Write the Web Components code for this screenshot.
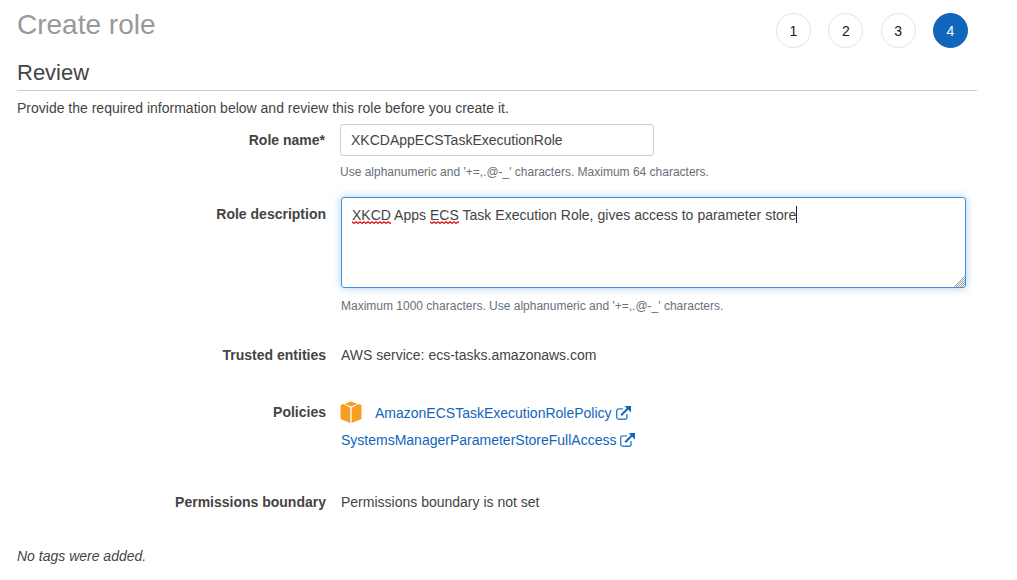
<!DOCTYPE html>
<html>
<head>
<meta charset="utf-8">
<style>
  html, body { margin: 0; height: 580px; overflow: hidden; background: #fff; }
  body { font-family: "Liberation Sans", Arial, sans-serif; font-size: 14px; color: #444; }
  .typo { padding-bottom: 1px; background: url("data:image/svg+xml,%3Csvg xmlns='http://www.w3.org/2000/svg' width='4' height='3'%3E%3Cpath d='M0 .9C1 .9 1 2.2 2 2.2S3 .9 4 .9' fill='none' stroke='%23e00000' stroke-width='1.2'/%3E%3C/svg%3E") repeat-x left bottom; }
</style>
</head>
<body>
<template id="step-tpl">
  <style>
    :host { display: flex; width: 35px; height: 35px; box-sizing: border-box; border-radius: 50%; border: 1px solid #e1e4e4;
      align-items: center; justify-content: center; font-size: 14px; color: #16191f; background: #fff; }
    :host([active]) { background: #1166bb; border-color: #1166bb; color: #fff; }
  </style>
  <slot></slot>
</template>

<template id="row-tpl">
  <style>
    :host { display: grid; grid-template-columns: var(--label-width, 309px) 1fr; column-gap: 15px; }
    .label { font-weight: bold; text-align: right; color: #444; line-height: 20px; padding-top: var(--label-pad, 0); }
    .hint { font-size: 12px; color: #687078; line-height: 16px; margin-top: var(--hint-gap, 7px); }
    .value { min-width: 0; line-height: 20px; }
  </style>
  <div class="label"><slot name="label"></slot></div>
  <div class="value"><slot></slot><div class="hint"><slot name="hint"></slot></div></div>
</template>

<template id="link-tpl">
  <style>
    :host { display: inline-flex; align-items: center; gap: 4px; color: #1166bb; line-height: 20px; }
    svg { width: 15px; height: 14px; display: block; }
  </style>
  <slot></slot>
  <svg viewBox="0 0 15 14" fill="none" stroke="#1166bb" stroke-width="1.4">
    <path d="M11 8v3.2A2 2 0 0 1 9 13.2H2.7a2 2 0 0 1-2-2V4.9a2 2 0 0 1 2-2H7" stroke="#3a80c8"/>
    <path d="M5.2 9.2 12.6 1.8" stroke-width="2"/>
    <path d="M8.6 0H15v6.4z" fill="#1166bb" stroke="none"/>
  </svg>
</template>

<template id="page-tpl">
  <style>
    :host { display: block; width: 960px; padding: 0 0 0 17px; }
    header { display: flex; justify-content: space-between; height: 60px; }
    h1 { margin: 8px 0 0; font-size: 28px; font-weight: normal; line-height: 34px; color: #999; }
    .steps { display: flex; gap: 17.33px; margin: 13px 9px 0 0; }
    h2 { margin: 0; font-size: 22px; font-weight: normal; line-height: 26px; color: #444; height: 30px; border-bottom: 1px solid #ccc; }
    p { margin: 0; line-height: 20px; }
    .intro { margin-top: 7px; }
    .rows { display: flex; flex-direction: column; margin-top: 7px; }
    .tags { font-style: italic; margin-top: 27px; }
  </style>
  <header>
    <h1><slot name="title"></slot></h1>
    <div class="steps"><slot name="steps"></slot></div>
  </header>
  <h2><slot name="section"></slot></h2>
  <p class="intro"><slot name="intro"></slot></p>
  <div class="rows"><slot></slot></div>
  <p class="tags"><slot name="tags"></slot></p>
</template>

<template id="input-tpl">
  <style>
    :host { display: block; width: 314px; height: 32px; box-sizing: border-box; border: 1px solid #ccc; border-radius: 3px;
      padding: 0 10px; line-height: 30px; color: #444; background: #fff; margin-top: -1px; }
  </style>
  <slot></slot>
</template>

<template id="area-tpl">
  <style>
    :host { display: block; position: relative; width: 625px; height: 91px; box-sizing: border-box; border: 1px solid #4a90d9; border-radius: 3px;
      padding: 7px 10px; line-height: 20px; color: #444; background: #fff; box-shadow: 0 0 8px rgba(102,175,233,.6); word-spacing: .1px; }
    .caret { display: inline-block; width: 1px; height: 17px; background: #222; vertical-align: -3px; }
    svg { position: absolute; right: 0; bottom: 0; width: 11px; height: 11px; }
  </style>
  <slot></slot><span class="caret"></span>
  <svg viewBox="0 0 11 11" stroke="#9a9a9a" stroke-width="1"><path d="M11 0 0 11M11 2 2 11M11 4 4 11M11 6 6 11M11 8 8 11"/></svg>
</template>

<template id="policy-tpl">
  <style>
    :host { display: flex; flex-direction: column; gap: 7px; margin-top: 1px; }
    .first { display: flex; align-items: center; gap: 13px; height: 20px; margin-left: -1px; }
    svg { width: 22px; height: 22px; display: block; margin-top: -3px; }
  </style>
  <div class="first">
    <svg viewBox="0 0 22 22" fill="#f79f25">
      <path d="M11 .5 17.5 3 11 5.5 4.5 3z"/>
      <path d="M.5 4 3.5 3 10.3 6.7V22L.5 18z"/>
      <path d="M21.5 4 18.5 3 11.7 6.7V22L21.5 18z"/>
    </svg>
    <slot name="first"></slot>
  </div>
  <slot></slot>
</template>

<create-role-page>
  <span slot="title">Create role</span>
  <role-step slot="steps">1</role-step>
  <role-step slot="steps">2</role-step>
  <role-step slot="steps">3</role-step>
  <role-step slot="steps" active>4</role-step>
  <span slot="section">Review</span>
  <span slot="intro">Provide the required information below and review this role before you create it.</span>

  <role-row style="--label-width:308px;--label-pad:5px;--hint-gap:8px">
    <span slot="label">Role name*</span>
    <role-input>XKCDAppECSTaskExecutionRole</role-input>
    <span slot="hint">Use alphanumeric and '+=,.@-_' characters. Maximum 64 characters.</span>
  </role-row>
  <role-row style="margin-top:17px;--label-pad:7px;--hint-gap:10px">
    <span slot="label">Role description</span>
    <role-area><span class="typo">XKCD</span> Apps <span class="typo">ECS</span> Task Execution Role, gives access to parameter store</role-area>
    <span slot="hint">Maximum 1000 characters. Use alphanumeric and '+=,.@-_' characters.</span>
  </role-row>
  <role-row style="margin-top:31px">
    <span slot="label">Trusted entities</span>
    AWS service: ecs-tasks.amazonaws.com
  </role-row>
  <role-row style="margin-top:30px">
    <span slot="label">Policies</span>
    <role-policies>
      <policy-link slot="first">AmazonECSTaskExecutionRolePolicy</policy-link>
      <policy-link>SystemsManagerParameterStoreFullAccess</policy-link>
    </role-policies>
  </role-row>
  <role-row style="margin-top:35px">
    <span slot="label">Permissions boundary</span>
    Permissions boundary is not set
  </role-row>
  <span slot="tags">No tags were added.</span>
</create-role-page>

<script>
  function shadowFrom(id) {
    return class extends HTMLElement {
      constructor() {
        super();
        this.attachShadow({ mode: "open" }).appendChild(document.getElementById(id).content.cloneNode(true));
      }
    };
  }
  customElements.define("create-role-page", shadowFrom("page-tpl"));
  customElements.define("role-step", shadowFrom("step-tpl"));
  customElements.define("role-row", shadowFrom("row-tpl"));
  customElements.define("role-input", shadowFrom("input-tpl"));
  customElements.define("role-area", shadowFrom("area-tpl"));
  customElements.define("role-policies", shadowFrom("policy-tpl"));
  customElements.define("policy-link", shadowFrom("link-tpl"));
</script>
</body>
</html>
